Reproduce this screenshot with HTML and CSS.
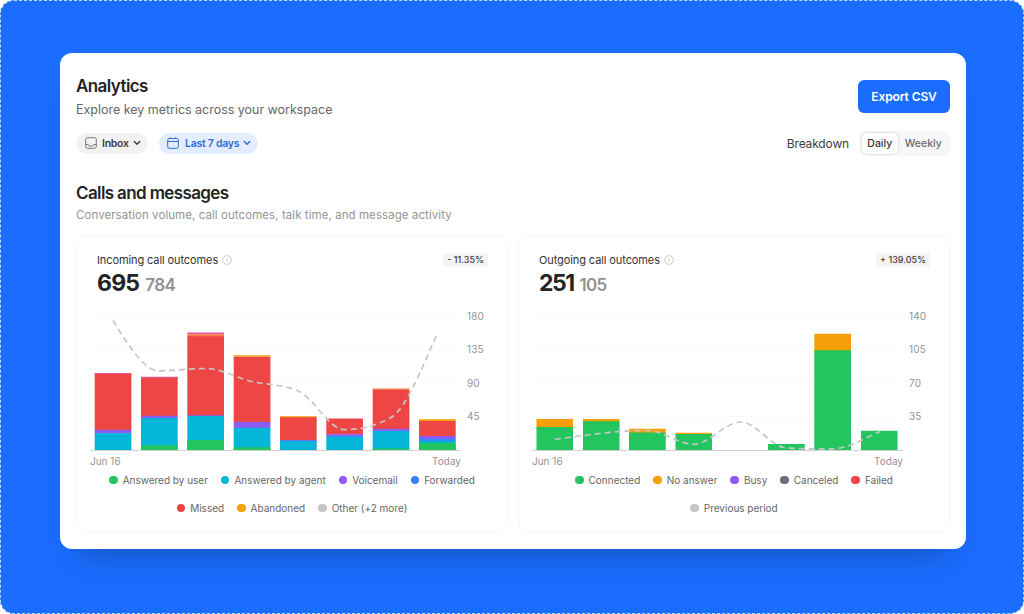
FILE: index.html
```html
<!DOCTYPE html>
<html lang="en">
<head>
<meta charset="utf-8">
<title>Analytics</title>
<link rel="stylesheet" href="styles.css">
</head>
<body>
<div class="stage">
<main class="window">
  <header class="header">
    <div>
      <h1 class="title">Analytics</h1>
      <p class="subtitle">Explore key metrics across your workspace</p>
    </div>
    <button class="export">Export CSV</button>
  </header>
  <div class="toolbar">
    <div class="filters">
      <button class="chip chip-inbox">
        <svg width="12" height="12" viewBox="0 0 12 12" class="icon"><rect x=".7" y=".7" width="10.600" height="10.600" rx="1.800"/><path d="M.7 7.500h2.200c.5 0 .6.300.8.700.3.600.5.900 1.100.9h2.400c.6 0 .8-.300 1.100-.9.2-.400.3-.700.8-.7h2.200"/></svg>
        <span>Inbox</span>
        <svg width="8" height="6" viewBox="0 0 8 6" class="caret"><path d="M1.300 1.500 4 4.200l2.700-2.700"/></svg>
      </button>
      <button class="chip chip-date">
        <svg width="12" height="12" viewBox="0 0 12 12" class="icon"><rect x=".7" y="1.500" width="10.600" height="9.800" rx="1.800"/><path d="M.7 4.500h10.600M3.300.4v1.400M8.700.4v1.400"/></svg>
        <span>Last 7 days</span>
        <svg width="8" height="6" viewBox="0 0 8 6" class="caret"><path d="M1.300 1.500 4 4.200l2.700-2.700"/></svg>
      </button>
    </div>
    <div class="breakdown">
      <span class="breakdown-label">Breakdown</span>
      <div class="segmented"><button class="segment active">Daily</button><button class="segment">Weekly</button></div>
    </div>
  </div>
  <h2 class="section-title">Calls and messages</h2>
  <p class="section-subtitle">Conversation volume, call outcomes, talk time, and message activity</p>
  <div class="panels">
    <section class="panel">
      <div class="panel-head">
        <h3 class="panel-title">Incoming call outcomes <svg width="10" height="10" viewBox="0 0 10 10" class="info"><circle cx="5" cy="5" r="4.400"/><path d="M5 4.500v2.600M5 2.800v.8"/></svg></h3>
        <span class="delta">- 11.35%</span>
      </div>
      <div class="totals"><strong>695</strong><span>784</span></div>
      <div class="chart">
        <svg class="plot" width="371" height="140" viewBox="90 312 371 140">
          <path class="grid" d="M90 315.500h371M90 349.500h371M90 383.500h371M90 416.500h371"/>
          <g class="red"><path d="M94.700 373.300h36.700v57H94.700zM141 377h36.700v39H141zM187.300 336h36.700v80h-36.700zM233.700 356.500h36.700v66h-36.700zM280 417h36.700v24H280zM326.300 418.500h36.700v16h-36.700zM372.700 389.300h36.700v40h-36.700zM419 421h36.700v15.500H419z"/></g>
          <g class="pink"><path d="M94.700 373h36.700v1H94.700zM141 376.700h36.700v1H141zM187.300 332.500h36.700v2h-36.700z"/></g>
          <g class="orange"><path class="coral" d="M187.300 334.300h36.700v2h-36.700z"/><path d="M233.700 355.200h36.700v1.300h-36.700zM280 416.200h36.700v1H280zM419 419.200h36.700v1.800H419z"/><path class="coral" d="M372.700 388.600h36.700v.8h-36.700z"/></g>
          <g class="purple"><path d="M94.700 429.700h36.700v4H94.700zM141 415.700h36.700v3H141zM187.300 415.300h36.700v1h-36.700zM233.700 422h36.700v6h-36.700zM280 440h36.700v1H280zM326.300 434.300h36.700v2h-36.700zM372.700 428.700h36.700v2.600h-36.700zM419 436h36.700v3H419z"/></g>
          <g class="cyan"><path d="M94.700 433.300h36.700V450H94.700zM141 418h36.700v32H141zM187.300 416h36.700v34h-36.700zM233.700 427.700h36.700V450h-36.700zM280 440.700h36.700V450H280zM326.300 436.300h36.700V450h-36.700zM372.700 431h36.700v19h-36.700zM419 440h36.700v10H419z"/></g>
          <path class="blue" d="M419 438.700h36.700v2H419zM326.300 435.700h36.700v1h-36.700z"/>
          <g class="green"><path d="M141 445.300h36.700v4.700H141zM187.300 440h36.700v10h-36.700zM233.700 447.300h36.700v2.700h-36.700zM372.700 448.500h36.700v1.500h-36.700zM419 443h36.700v7H419z"/></g>
          <path class="axis" d="M90 450.500h371"/>
          <path class="previous" d="M113 320.500C128 345 144 370.800 159.300 370.800C174.800 370.800 190 368.500 205.700 368.500C221 368.500 236.500 378 252 381.500C267 385 284 384.500 298.300 391C314 398 329 429.700 344.700 429.700C360 429.700 375.500 426 391 417.500C406.500 408.500 421.500 368 437.300 334"/>
        </svg>
        <div class="scale"><span>180</span><span>135</span><span>90</span><span>45</span></div>
      </div>
      <div class="dates"><span>Jun 16</span><span>Today</span></div>
      <ul class="legend">
        <li><i class="dot d-green"></i>Answered by user</li><li><i class="dot d-cyan"></i>Answered by agent</li><li><i class="dot d-purple"></i>Voicemail</li><li><i class="dot d-blue"></i>Forwarded</li>
      </ul>
      <ul class="legend">
        <li><i class="dot d-red"></i>Missed</li><li><i class="dot d-orange"></i>Abandoned</li><li><i class="dot d-silver"></i>Other (+2 more)</li>
      </ul>
    </section>
    <section class="panel">
      <div class="panel-head">
        <h3 class="panel-title">Outgoing call outcomes <svg width="10" height="10" viewBox="0 0 10 10" class="info"><circle cx="5" cy="5" r="4.400"/><path d="M5 4.500v2.600M5 2.800v.8"/></svg></h3>
        <span class="delta">+ 139.05%</span>
      </div>
      <div class="totals totals-out"><strong>251</strong><span>105</span></div>
      <div class="chart">
        <svg class="plot" width="371" height="140" viewBox="532 312 371 140">
          <path class="grid" d="M532 315.500h371M532 349.500h371M532 383.500h371M532 416.500h371"/>
          <path class="orange" d="M536.500 419H573v10h-36.500zM583 419h36.500v4H583zM629 428.700h36.700v5H629zM675.500 432.700H712v3h-36.500zM814.300 333.700H851v18h-36.700z"/>
          <path class="green" d="M536.500 427H573v23h-36.500zM583 421.300h36.500V450H583zM629 432.500h36.700V450H629zM675.500 434H712v16h-36.500zM768 444h36.700v6H768zM814.300 350.300H851V450h-36.700zM861 430.800h36.500V450H861z"/>
          <path class="axis" d="M532 450.500h371"/>
          <path class="previous" d="M555 439.300C570 437.300 586 435 601 433.300C617 431.500 632 430.500 647.500 430.500C663 430.500 678 444.300 694 444.300C709 444.300 725 422 740.500 422C756 422 771 447 786.500 448C802 449 817 448.800 832.500 448.800C848 448.800 864 438.500 880 431.500"/>
        </svg>
        <div class="scale"><span>140</span><span>105</span><span>70</span><span>35</span></div>
      </div>
      <div class="dates"><span>Jun 16</span><span>Today</span></div>
      <ul class="legend">
        <li><i class="dot d-green"></i>Connected</li><li><i class="dot d-orange"></i>No answer</li><li><i class="dot d-purple"></i>Busy</li><li><i class="dot d-slate"></i>Canceled</li><li><i class="dot d-red"></i>Failed</li>
      </ul>
      <ul class="legend">
        <li><i class="dot d-silver"></i>Previous period</li>
      </ul>
    </section>
  </div>
</main>
</div>
</body>
</html>
```
FILE: styles.css
```css
* { box-sizing: border-box; margin: 0; padding: 0; }
body { background: #fff; font-family: Inter, "Liberation Sans", sans-serif; color: #242424; overflow: hidden; }
button { border: 0; background: none; font: inherit; color: inherit; }
.stage { width: 1024px; height: 614px; border: 1px dashed #b5dcff; border-radius: 14px; background: #1a6dff; padding: 52px 57px 0 59px; }
.window { width: 906px; height: 496px; background: #fff; border-radius: 12px; padding: 23px 16px 0; box-shadow: 0 24px 28px -18px rgba(20, 45, 100, .4); }
.header { display: flex; justify-content: space-between; height: 56px; }
.title { font-size: 17px; line-height: 21px; font-weight: 600; letter-spacing: -.58px; }
.subtitle { font-size: 12.500px; line-height: 16px; margin-top: 5px; color: #666; letter-spacing: -.02px; white-space: nowrap; }
.export { width: 92px; height: 33px; margin-top: 4px; border-radius: 6px; background: #1a6dff; color: #fff; font-size: 12px; font-weight: 600; letter-spacing: -.1px; }
.toolbar { display: flex; justify-content: space-between; align-items: center; height: 22px; }
.filters, .breakdown { display: flex; align-items: center; }
.filters { gap: 11px; }
.chip { display: flex; align-items: center; height: 21px; border-radius: 11px; font-size: 10.500px; font-weight: 600; letter-spacing: -.27px; white-space: nowrap; }
.chip-inbox { width: 72px; padding-left: 9px; background: #f3f2f2; color: #3c3c3c; }
.chip-date { width: 99px; padding-left: 8px; background: #e3edff; color: #2f6bd8; }
.chip span { margin: 0 4px 0 5px; }
.chip-date span { margin-left: 6px; }
.icon, .caret, .info { fill: none; stroke: currentColor; stroke-width: 1; }
.chip-inbox .icon { color: #777; }
.caret { stroke-width: 1.400; stroke-linecap: round; stroke-linejoin: round; }
.breakdown { gap: 10px; }
.breakdown-label { font-size: 12px; letter-spacing: -.15px; color: #3b3b3b; }
.segmented { display: flex; width: 91px; height: 25px; padding: 2px 1px 2px 3px; background: #f7f7f7; border-radius: 6px; font-size: 10.500px; letter-spacing: -.25px; }
.segment { width: 52px; color: #6c6c6c; font-weight: 500; }
.segment.active { width: 36px; background: #fff; border-radius: 5px; color: #333; box-shadow: 0 0 2px rgba(0, 0, 0, .25); }
.section-title { margin-top: 28px; font-size: 17px; line-height: 22px; font-weight: 600; letter-spacing: -.62px; }
.section-subtitle { margin-top: 3px; font-size: 11.500px; line-height: 16px; color: #959595; letter-spacing: .07px; white-space: nowrap; }
.panels { display: grid; grid-template-columns: 432px 432px; gap: 10px; margin-top: 12px; }
.panel { height: 297px; border: 1px solid #f7f7f7; border-radius: 9px; }
.panel-head { display: flex; justify-content: space-between; align-items: center; padding: 16px 19px 0 20px; height: 32px; }
.panel-title { display: flex; align-items: center; gap: 4px; font-size: 11px; font-weight: 400; letter-spacing: -.1px; color: #333; }
.info { color: #c2c2c2; stroke-width: .8; }
.delta { height: 14px; padding: 0 4px; line-height: 14px; border-radius: 3px; background: #f4f4f4; font-size: 9px; font-weight: 500; color: #3c3c3c; }
.totals { display: flex; align-items: baseline; gap: 6px; height: 44px; padding-left: 20px; line-height: 31px; }
.totals strong { font-size: 23px; font-weight: 700; letter-spacing: -.8px; }
.totals span { font-size: 17px; font-weight: 600; letter-spacing: -.6px; color: #919191; }
.totals-out strong { letter-spacing: -1.500px; }
.totals-out span { letter-spacing: -.8px; }
.chart { display: flex; gap: 6px; padding-left: 13px; height: 140px; }
.plot { display: block; flex: none; }
.grid { stroke: #fafafa; }
.axis { stroke: #d2d2d2; }
.previous { fill: none; stroke: #c6c6c6; stroke-width: 1.700; stroke-dasharray: 6 4; }
.red { fill: #ee4545; }
.pink { fill: #e653a0; }
.orange { fill: #f59f0b; }
.coral { fill: #f58245; }
.purple { fill: #8b5cf6; }
.cyan { fill: #06b6d8; }
.blue { fill: #3b82f6; }
.green { fill: #23c55e; }
.scale { display: flex; flex-direction: column; font-size: 10px; line-height: 33.300px; letter-spacing: .15px; color: #949494; margin-top: -12px; }
.dates { display: flex; justify-content: space-between; width: 371px; margin: 2px 0 0 13px; height: 15px; line-height: 15px; font-size: 10px; color: #949494; }
.legend { display: flex; justify-content: center; gap: 13px; list-style: none; height: 28px; padding-top: 4px; font-size: 10px; line-height: 14px; letter-spacing: -.01px; color: #666; }
.legend li { display: flex; align-items: center; height: 14px; gap: 5px; white-space: nowrap; }
.dot { width: 8.500px; height: 8.500px; border-radius: 50%; }
.d-green { background: #23c55e; }
.d-cyan { background: #08b5d5; }
.d-purple { background: #8b5cf6; }
.d-blue { background: #3b82f6; }
.d-red { background: #ef4444; }
.d-orange { background: #f59f0b; }
.d-silver { background: #c5c5c5; }
.d-slate { background: #6f6c80; }
```
